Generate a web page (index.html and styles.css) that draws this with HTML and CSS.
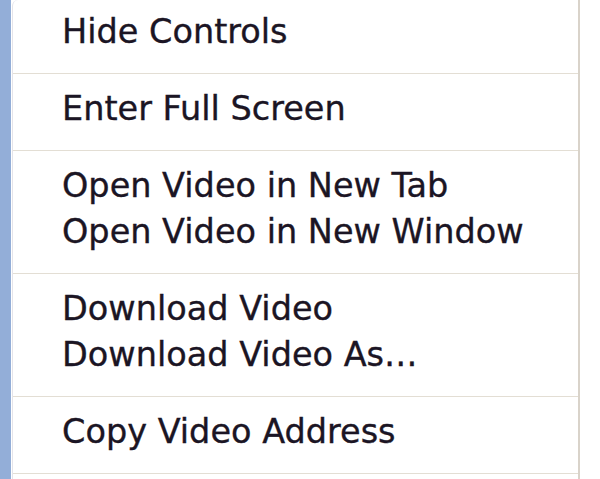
FILE: index.html
```html
<!DOCTYPE html>
<html>
<head>
<meta charset="utf-8">
<link rel="stylesheet" href="styles.css">
</head>
<body>
<div class="screen">
  <div class="sidebar"></div>
  <div class="menu">
    <div class="group first">
      <div class="item">Hide Controls</div>
    </div>
    <div class="group">
      <div class="item">Enter Full Screen</div>
    </div>
    <div class="group">
      <div class="item">Open Video in New Tab</div>
      <div class="item">Open Video in New Window</div>
    </div>
    <div class="group">
      <div class="item">Download Video</div>
      <div class="item">Download Video As…</div>
    </div>
    <div class="group">
      <div class="item">Copy Video Address</div>
    </div>
    <div class="group last"></div>
  </div>
  <div class="outside"></div>
</div>
</body>
</html>
```
FILE: styles.css
```css
html, body {
  margin: 0;
  padding: 0;
  background: #ffffff;
}
.screen {
  display: flex;
  width: 600px;
  height: 479px;
  overflow: hidden;
}
.sidebar {
  width: 11px;
  flex: none;
  background: #93aed8;
}
.menu {
  width: 565px;
  flex: none;
  margin-left: 1px;
  background: #ffffff;
  border-top-left-radius: 6px;
  border-left: 1px solid #e4e4ea;
  border-right: 2px solid #d9d3ca;
  font-family: "DejaVu Sans", "Liberation Sans", sans-serif;
  font-size: 33.5px;
  line-height: 46px;
  color: #1b1524;
  -webkit-text-stroke: 0.35px #1b1524;
}
.group {
  padding: 12px 0 18px 49px;
  border-bottom: 1px solid #e3ded4;
}
.group.first {
  padding-top: 9px;
}
.group.double {
  padding-bottom: 19px;
}
.group.last {
  border-bottom: none;
  padding: 0;
}
.item {
  white-space: nowrap;
}
.outside {
  flex: 1;
  background: #ffffff;
}
```
